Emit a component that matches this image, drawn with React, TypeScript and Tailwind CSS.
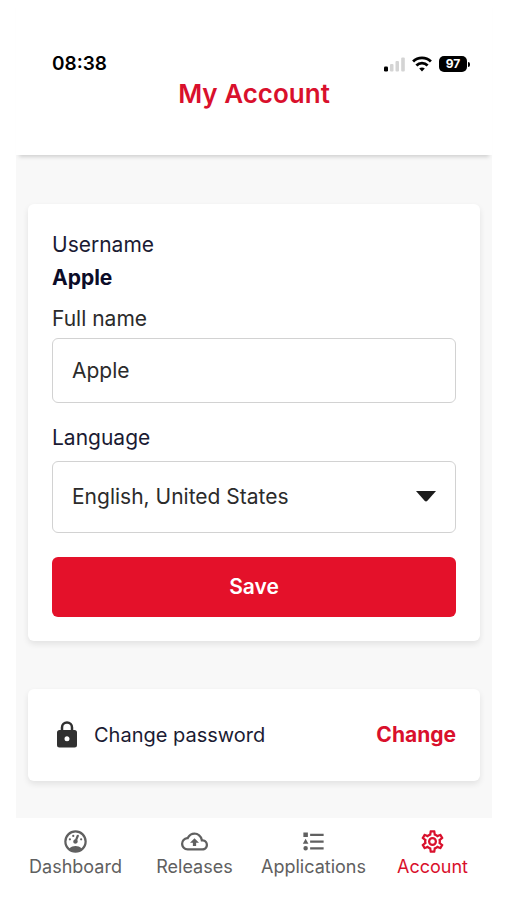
import React, { useState } from "react";

const icons = {
  gauge:
    "M12,2A10,10 0 0,0 2,12A10,10 0 0,0 12,22A10,10 0 0,0 22,12A10,10 0 0,0 12,2M12,4A8,8 0 0,1 20,12C20,14.4 19,16.5 17.3,18C15.9,16.7 14,16 12,16C10,16 8.2,16.7 6.7,18C5,16.5 4,14.4 4,12A8,8 0 0,1 12,4M14,5.89C13.62,5.9 13.26,6.15 13.1,6.54L11.81,9.77L11.71,10C11,10.13 10.41,10.6 10.14,11.26C9.73,12.29 10.23,13.45 11.26,13.86C12.29,14.27 13.45,13.77 13.86,12.74C14.12,12.08 14,11.32 13.57,10.76L13.67,10.5L14.96,7.29L14.97,7.26C15.17,6.75 14.92,6.17 14.41,5.96C14.28,5.91 14.15,5.89 14,5.89M10,6A1,1 0 0,0 9,7A1,1 0 0,0 10,8A1,1 0 0,0 11,7A1,1 0 0,0 10,6M7,9A1,1 0 0,0 6,10A1,1 0 0,0 7,11A1,1 0 0,0 8,10A1,1 0 0,0 7,9M17,9A1,1 0 0,0 16,10A1,1 0 0,0 17,11A1,1 0 0,0 18,10A1,1 0 0,0 17,9Z",
  cloud:
    "M19.35 10.04A7.49 7.49 0 0 0 12 4C9.11 4 6.6 5.64 5.35 8.04A5.994 5.994 0 0 0 0 14c0 3.31 2.69 6 6 6h13c2.76 0 5-2.24 5-5 0-2.64-2.05-4.78-4.65-4.96zM19 18H6c-2.21 0-4-1.79-4-4 0-2.05 1.53-3.76 3.56-3.97l1.07-.11.5-.95A5.469 5.469 0 0 1 12 6c2.62 0 4.88 1.86 5.39 4.43l.3 1.5 1.53.11A2.98 2.98 0 0 1 22 15c0 1.65-1.35 3-3 3zM8 13h2.55v3h2.9v-3H16l-4-4z",
  list: "M5,9.5L7.5,14H2.5L5,9.5M3,4H7V8H3V4M5,20A2,2 0 0,0 7,18A2,2 0 0,0 5,16A2,2 0 0,0 3,18A2,2 0 0,0 5,20M9,5V7H21V5H9M9,19H21V17H9V19M9,13H21V11H9V13Z",
  cog: "M12,8A4,4 0 0,1 16,12A4,4 0 0,1 12,16A4,4 0 0,1 8,12A4,4 0 0,1 12,8M12,10A2,2 0 0,0 10,12A2,2 0 0,0 12,14A2,2 0 0,0 14,12A2,2 0 0,0 12,10M10,22C9.75,22 9.54,21.82 9.5,21.58L9.13,18.93C8.5,18.68 7.96,18.34 7.44,17.94L4.95,18.95C4.73,19.03 4.46,18.95 4.34,18.73L2.34,15.27C2.21,15.05 2.27,14.78 2.46,14.63L4.57,12.97L4.5,12L4.57,11L2.46,9.37C2.27,9.22 2.21,8.95 2.34,8.73L4.34,5.27C4.46,5.05 4.73,4.96 4.95,5.05L7.44,6.05C7.96,5.66 8.5,5.32 9.13,5.07L9.5,2.42C9.54,2.18 9.75,2 10,2H14C14.25,2 14.46,2.18 14.5,2.42L14.87,5.07C15.5,5.32 16.04,5.66 16.56,6.05L19.05,5.05C19.27,4.96 19.54,5.05 19.66,5.27L21.66,8.73C21.79,8.95 21.73,9.22 21.54,9.37L19.43,11L19.5,12L19.43,13L21.54,14.63C21.73,14.78 21.79,15.05 21.66,15.27L19.66,18.73C19.54,18.95 19.27,19.04 19.05,18.95L16.56,17.95C16.04,18.34 15.5,18.68 14.87,18.93L14.5,21.58C14.46,21.82 14.25,22 14,22H10M11.25,4L10.88,6.61C9.68,6.86 8.62,7.5 7.85,8.39L5.44,7.35L4.69,8.65L6.8,10.2C6.4,11.37 6.4,12.64 6.8,13.8L4.68,15.36L5.43,16.66L7.86,15.62C8.63,16.5 9.68,17.14 10.87,17.38L11.24,20H12.76L13.13,17.39C14.32,17.14 15.37,16.5 16.14,15.62L18.57,16.66L19.32,15.36L17.2,13.81C17.6,12.64 17.6,11.37 17.2,10.2L19.31,8.65L18.56,7.35L16.15,8.39C15.38,7.5 14.32,6.86 13.12,6.62L12.75,4H11.25Z",
  lock: "M12,17A2,2 0 0,0 14,15C14,13.89 13.1,13 12,13A2,2 0 0,0 10,15A2,2 0 0,0 12,17M18,8A2,2 0 0,1 20,10V20A2,2 0 0,1 18,22H6A2,2 0 0,1 4,20V10C4,8.89 4.9,8 6,8H7V6A5,5 0 0,1 12,1A5,5 0 0,1 17,6V8H18M12,3A3,3 0 0,0 9,6V8H15V6A3,3 0 0,0 12,3Z",
};

interface NavItem {
  label: string;
  icon: keyof typeof icons;
  active?: boolean;
}

const navItems: NavItem[] = [
  { label: "Dashboard", icon: "gauge" },
  { label: "Releases", icon: "cloud" },
  { label: "Applications", icon: "list" },
  { label: "Account", icon: "cog", active: true },
];

function Icon({ name, className }: { name: keyof typeof icons; className: string }) {
  return (
    <svg viewBox="0 0 24 24" fill="currentColor" className={className} aria-hidden="true">
      <path d={icons[name]} />
    </svg>
  );
}

function StatusBar() {
  return (
    <div className="flex h-6 items-center justify-between pr-[22px] pl-9 text-black">
      <span className="text-[19px] leading-6 font-semibold">08:38</span>
      <div className="flex items-center gap-[7px]">
        <svg viewBox="0 0 22 16" className="h-4 w-[22px]" aria-hidden="true">
          <rect x="1" y="10.5" width="4" height="5" rx="1.3" fill="#000" />
          <rect x="7" y="8" width="3.5" height="7.5" rx="1" fill="#d4d4d4" />
          <rect x="12.5" y="5" width="3.5" height="10.5" rx="1" fill="#d4d4d4" />
          <rect x="18.2" y="1.5" width="3.6" height="14" rx="1" fill="#d4d4d4" />
        </svg>
        <svg viewBox="0 0 20 16" className="h-4 w-5" fill="none" stroke="#000" strokeWidth="2.8" aria-hidden="true">
          <path d="M1.1 5.6a12.6 12.6 0 0 1 17.8 0" />
          <path d="M4.4 9.4a7.9 7.9 0 0 1 11.2 0" />
          <path d="M10 15.4l-2.8-2.8a3.9 3.9 0 0 1 5.6 0z" fill="#000" stroke="none" />
        </svg>
        <div className="flex items-center gap-px">
          <span className="flex h-4 w-7 items-center justify-center rounded-[5px] bg-black text-xs leading-4 font-bold text-white">
            97
          </span>
          <span className="h-[5px] w-0.5 rounded-r-full bg-black" />
        </div>
      </div>
    </div>
  );
}

export default function App() {
  const [fullName, setFullName] = useState("Apple");
  const [language, setLanguage] = useState("en-US");

  return (
    <div className="flex min-h-screen flex-col bg-white pr-[15px] pl-4 font-['Inter',sans-serif] text-[21px] text-[#2b2b2b]">
      <header className="relative z-10 bg-white pt-[52px] pb-[43px] shadow-[0_5px_4px_-3px_rgba(0,0,0,0.16)]">
        <StatusBar />
        <h1 className="text-center text-[26px] leading-9 font-semibold text-[#d9102c]">My Account</h1>
      </header>

      <main className="flex flex-1 flex-col gap-12 bg-[#f8f8f8] px-3 pt-[49px] pb-9">
        <form
          className="flex flex-col rounded-md bg-white p-6 shadow-[0_3px_6px_rgba(0,0,0,0.09)]"
          onSubmit={(e) => e.preventDefault()}
        >
          <p className="leading-[33px] text-[#1b1b33]">Username</p>
          <p className="mb-2.5 leading-[33px] font-bold text-[#0c0c28]">Apple</p>

          <label htmlFor="fullName" className="mb-1 leading-[30px]">
            Full name
          </label>
          <input
            id="fullName"
            type="text"
            value={fullName}
            onChange={(e) => setFullName(e.target.value)}
            className="mb-5 h-[65px] w-full rounded-md border border-[#d2d2d2] bg-white px-[19px]"
          />

          <label htmlFor="language" className="mb-2 leading-[30px] text-[#1b1b33]">
            Language
          </label>
          <div className="relative mb-6">
            <select
              id="language"
              value={language}
              onChange={(e) => setLanguage(e.target.value)}
              className="h-[72px] w-full appearance-none rounded-md border border-[#d2d2d2] bg-white px-[19px]"
            >
              <option value="en-US">English, United States</option>
            </select>
            <svg
              viewBox="0 0 20 11"
              className="pointer-events-none absolute top-[30px] right-5 h-[11px] w-5 fill-[#1c1c1c]"
              aria-hidden="true"
            >
              <path d="M0 0h20l-8.6 9.8q-1.4 1.4-2.8 0z" />
            </svg>
          </div>

          <button type="submit" className="h-[60px] rounded-md bg-[#e4112a] font-semibold text-white">
            Save
          </button>
        </form>

        <section className="flex h-[92px] items-center rounded-md bg-white px-6 shadow-[0_3px_6px_rgba(0,0,0,0.09)]">
          <Icon name="lock" className="mr-3 size-[30px] text-[#303030]" />
          <span className="text-xl text-[#1b1b33]">Change password</span>
          <button type="button" className="ml-auto font-bold text-[#d9102c]">
            Change
          </button>
        </section>
      </main>

      <nav className="grid h-[82px] grid-cols-4 bg-white pt-2.5">
        {navItems.map((item) => (
          <a
            key={item.label}
            href="#"
            aria-current={item.active ? "page" : undefined}
            className={`flex flex-col items-center text-lg leading-6 ${item.active ? "text-[#d9102c]" : "text-[#606060]"}`}
          >
            <Icon name={item.icon} className="size-[27px]" />
            {item.label}
          </a>
        ))}
      </nav>
    </div>
  );
}
